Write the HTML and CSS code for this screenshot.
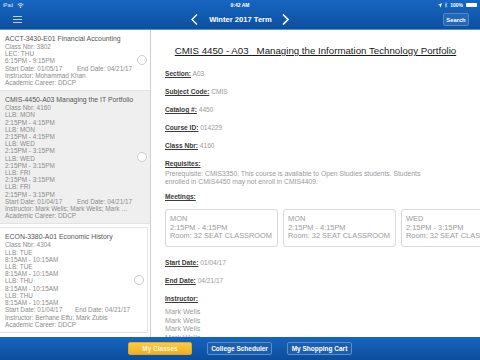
FILE: index.html
```html
<!DOCTYPE html>
<html>
<head>
  <title>Class Search</title>
  <link rel="stylesheet" href="styles.css">
</head>
<body>
<div class="screen">
  <header class="topbar">
    <div class="status">
      <div class="status-left">
        iPad
        <svg class="wifi" width="7" height="5" viewBox="0 0 14 10">
          <path d="M1 3.5 A9 9 0 0 1 13 3.5" fill="none" stroke="#fff" stroke-width="1.6"/>
          <path d="M3.5 6 A5.5 5.5 0 0 1 10.5 6" fill="none" stroke="#fff" stroke-width="1.6"/>
          <circle cx="7" cy="8.5" r="1.4" fill="#fff"/>
        </svg>
      </div>
      <div class="status-time">9:42 AM</div>
      <div class="status-right">
        <svg width="4" height="5" viewBox="0 0 8 10"><path d="M8 0 L0 4 L4 5 L5 10 Z" fill="#fff"/></svg>
        <svg width="4" height="6" viewBox="0 0 6 10"><path d="M1 3 L5 7 L3 9 V1 L5 3 L1 7" fill="none" stroke="#cfe0f5" stroke-width="0.9"/></svg>
        <span>100%</span>
        <span class="battery"></span>
      </div>
    </div>
    <nav class="nav">
      <div class="menu">
        <svg width="9" height="7" viewBox="0 0 9 7">
          <path d="M0 0.5 H9 M0 3.5 H9 M0 6.5 H9" stroke="#d2e2f5" stroke-width="0.9"/>
        </svg>
      </div>
      <div class="term">
        <svg width="7" height="11" viewBox="0 0 7 11"><path d="M6 0.5 L1 5.5 L6 10.5" fill="none" stroke="#fff" stroke-width="1.3"/></svg>
        <span class="term-name">Winter 2017 Term</span>
        <svg width="7" height="11" viewBox="0 0 7 11"><path d="M1 0.5 L6 5.5 L1 10.5" fill="none" stroke="#fff" stroke-width="1.6"/></svg>
      </div>
      <div class="nav-right">
        <button class="btn-search">Search</button>
      </div>
    </nav>
  </header>

  <main class="split">
    <aside class="classes">
      <div class="class-item">
        <div class="class-text">
          <div class="class-title">ACCT-3430-E01 Financial Accounting</div>
          <div>Class Nbr: 3802</div>
          <div>LEC: THU</div>
          <div>6:15PM - 9:15PM</div>
          <div class="dates"><span class="start">Start Date: 01/05/17</span><span>End Date: 04/21/17</span></div>
          <div class="clip">Instructor: Mohammad Khan</div>
          <div>Academic Career: DDCP</div>
        </div>
        <span class="radio"></span>
      </div>

      <div class="class-item selected">
        <div class="class-text">
          <div class="class-title">CMIS-4450-A03 Managing the IT Portfolio</div>
          <div>Class Nbr: 4160</div>
          <div>LLB: MON</div>
          <div>2:15PM - 4:15PM</div>
          <div>LLB: MON</div>
          <div>2:15PM - 4:15PM</div>
          <div>LLB: WED</div>
          <div>2:15PM - 3:15PM</div>
          <div>LLB: WED</div>
          <div>2:15PM - 3:15PM</div>
          <div>LLB: FRI</div>
          <div>2:15PM - 3:15PM</div>
          <div>LLB: FRI</div>
          <div>2:15PM - 3:15PM</div>
          <div class="dates"><span class="start">Start Date: 01/04/17</span><span>End Date: 04/21/17</span></div>
          <div class="clip">Instructor: Mark Wells; Mark Wells; Mark Wells; Mark Wells</div>
          <div>Academic Career: DDCP</div>
        </div>
        <span class="radio"></span>
      </div>

      <div class="class-item card">
        <div class="class-text">
          <div class="class-title">ECON-3380-A01 Economic History</div>
          <div>Class Nbr: 4304</div>
          <div>LLB: TUE</div>
          <div>8:15AM - 10:15AM</div>
          <div>LLB: TUE</div>
          <div>8:15AM - 10:15AM</div>
          <div>LLB: THU</div>
          <div>8:15AM - 10:15AM</div>
          <div>LLB: THU</div>
          <div>8:15AM - 10:15AM</div>
          <div class="dates"><span class="start">Start Date: 01/04/17</span><span>End Date: 04/21/17</span></div>
          <div class="clip">Instructor: Berhane Effu; Mark Zubis</div>
          <div>Academic Career: DDCP</div>
        </div>
        <span class="radio"></span>
      </div>
    </aside>

    <section class="detail">
      <h1 class="detail-title">CMIS 4450 - A03&nbsp;&nbsp; Managing the Information Technology Portfolio</h1>

      <div class="field"><span class="label">Section:</span> <span class="value">A03</span></div>
      <div class="field"><span class="label">Subject Code:</span> <span class="value">CMIS</span></div>
      <div class="field"><span class="label">Catalog #:</span> <span class="value">4450</span></div>
      <div class="field"><span class="label">Course ID:</span> <span class="value">014229</span></div>
      <div class="field"><span class="label">Class Nbr:</span> <span class="value">4160</span></div>

      <div class="field block req">
        <div class="label">Requisites:</div>
        <div class="value text">Prerequisite: CMIS3350. This course is available to Open Studies students. Students enrolled in CMIS4450 may not enroll in CMIS4409.</div>
      </div>

      <div class="field block">
        <div class="label">Meetings:</div>
        <div class="meetings">
          <div class="meeting">MON<br>2:15PM - 4:15PM<br>Room: 32 SEAT CLASSROOM</div>
          <div class="meeting">MON<br>2:15PM - 4:15PM<br>Room: 32 SEAT CLASSROOM</div>
          <div class="meeting">WED<br>2:15PM - 3:15PM<br>Room: 32 SEAT CLASSROOM</div>
          <div class="meeting">WED<br>2:15PM - 3:15PM<br>Room: 32 SEAT CLASSROOM</div>
        </div>
      </div>

      <div class="field"><span class="label">Start Date:</span> <span class="value">01/04/17</span></div>
      <div class="field"><span class="label">End Date:</span> <span class="value">04/21/17</span></div>

      <div class="field block">
        <div class="label">Instructor:</div>
        <div class="value names">Mark Wells<br>Mark Wells<br>Mark Wells<br>Mark Wells</div>
      </div>
    </section>
  </main>

  <footer class="tabs">
    <button class="tab active">My Classes</button>
    <button class="tab">College Scheduler</button>
    <button class="tab">My Shopping Cart</button>
  </footer>
</div>
</body>
</html>
```

FILE: styles.css
```css
body {
  margin: 0;
  padding: 0;
  background: #fff;
  font-family: "Liberation Sans", Arial, sans-serif;
}

.screen {
  width: 480px;
  height: 360px;
  display: flex;
  flex-direction: column;
  overflow: hidden;
}

/* top bar */

.topbar {
  height: 30px;
  background: linear-gradient(#1766c2, #0c4f9f);
  color: #fff;
  border-bottom: 1px solid #5d8ec6;
  box-sizing: border-box;
}

.status {
  height: 10px;
  display: grid;
  grid-template-columns: 1fr auto 1fr;
  align-items: center;
  font-size: 5px;
  font-weight: bold;
  padding: 0 3px;
}

.status-left {
  display: flex;
  align-items: center;
  gap: 4px;
  font-weight: normal;
  color: #dfe9f6;
}

.status-right {
  display: flex;
  align-items: center;
  justify-content: flex-end;
  gap: 2px;
}

.battery {
  width: 11px;
  height: 4px;
  background: #fff;
  border-radius: 1px;
  margin-left: 1px;
}

.nav {
  height: 19px;
  display: grid;
  grid-template-columns: 1fr auto 1fr;
  align-items: center;
}

.menu {
  padding-left: 13px;
  display: flex;
}

.term {
  display: flex;
  align-items: center;
  gap: 10px;
}

.term-name {
  font-size: 7.6px;
  font-weight: bold;
  margin-left: 1px;
}

.nav-right {
  display: flex;
  justify-content: flex-end;
  padding-right: 11px;
}

.btn-search {
  font-family: inherit;
  font-size: 5.8px;
  font-weight: bold;
  color: #fff;
  background: #2467b4;
  border: 1px solid #4f88c8;
  border-radius: 2px;
  width: 26px;
  height: 13px;
  padding: 0;
}

/* content */

.split {
  flex: 1;
  display: flex;
  min-height: 0;
}

.classes {
  width: 150px;
  border-right: 1px solid #cfcfcf;
  overflow: hidden;
  flex-shrink: 0;
}

.class-item {
  display: flex;
  align-items: center;
  padding: 4px 3px 4px 5px;
  border-bottom: 1px solid #e2e2e2;
  font-size: 6.4px;
  line-height: 7.2px;
  color: #8c8c8c;
  background: #fff;
}

.class-item.selected {
  background: #efefef;
}

.class-item.card {
  margin: 3px 2px 0 0;
  border-top: 1px solid #e6e6e6;
  border-right: 1px solid #e6e6e6;
}

.class-text {
  flex: 1;
  min-width: 0;
  white-space: nowrap;
}

.class-title {
  font-size: 6.9px;
  line-height: 9px;
  color: #555;
}

.dates {
  display: flex;
}

.dates .start {
  width: 72px;
}

.clip {
  overflow: hidden;
  text-overflow: ellipsis;
  padding-right: 2px;
}

.radio {
  width: 8px;
  height: 8px;
  border: 1px solid #cdcdcd;
  border-radius: 50%;
  background: #fff;
  flex-shrink: 0;
  margin-left: 4px;
}

.detail {
  flex: 1;
  padding: 15px 0 0 14px;
  overflow: hidden;
  min-width: 0;
}

.detail-title {
  margin: 0 0 13px;
  font-size: 9.7px;
  line-height: 12px;
  font-weight: normal;
  color: #1a1a1a;
  text-decoration: underline;
  text-align: center;
  padding-right: 14px;
  white-space: nowrap;
}

.field {
  font-size: 6.6px;
  line-height: 8px;
  margin-bottom: 10px;
}

.field.req {
  margin-bottom: 7px;
}

.label {
  color: #3a3a3a;
  font-weight: bold;
  text-decoration: underline;
}

.value {
  color: #9a9a9a;
}

.text {
  margin-top: 2px;
  font-size: 6.8px;
  padding-right: 50px;
}

.meetings {
  display: flex;
  gap: 5px;
  margin-top: 8px;
  margin-bottom: 12px;
}

.meeting {
  flex-shrink: 0;
  width: 103px;
  height: 26px;
  padding: 5px 4px;
  border: 1px solid #d8d8d8;
  border-radius: 3px;
  font-size: 7.4px;
  line-height: 8.5px;
  color: #9a9a9a;
}

.names {
  margin-top: 5px;
  font-size: 7.2px;
  line-height: 8.6px;
}

/* bottom tabs */

.tabs {
  height: 23px;
  flex-shrink: 0;
  background: linear-gradient(#1565c0, #0c4d9c);
  display: flex;
  justify-content: center;
  align-items: center;
  gap: 15px;
}

.tab {
  font-family: inherit;
  font-size: 6.5px;
  font-weight: bold;
  color: #fff;
  width: 65px;
  height: 13px;
  padding: 0;
  background: #1d5fac;
  border: 1px solid #5a8fcf;
  border-radius: 2px;
}

.tab.active {
  width: 64px;
  background: linear-gradient(#f8cb4a, #eeb11e);
  border-color: #e0a81e;
  color: #fff7df;
}
```
